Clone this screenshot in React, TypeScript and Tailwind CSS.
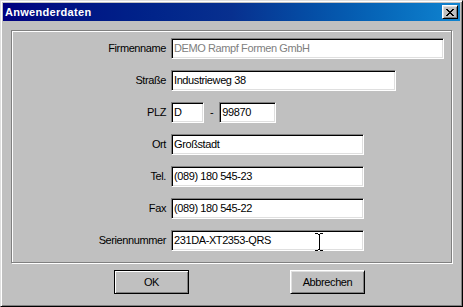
import React from "react";

function Field({ w, value, disabled }: { w: string; value: string; disabled?: boolean }) {
  return (
    <div
      className={`${w} h-[21px] bg-white border border-t-[#808080] border-l-[#808080] border-r-white border-b-white shadow-[inset_1px_1px_0_#000,inset_-1px_-1px_0_#dfdfdf] pl-[2px] flex items-center whitespace-nowrap overflow-hidden ${
        disabled ? "text-[#808080]" : "text-black"
      }`}
    >
      {value}
    </div>
  );
}

function Row({ label, children }: { label: string; children: React.ReactNode }) {
  return (
    <div className="flex items-center h-[21px]">
      <div className="w-[154px] text-right text-black mr-[5px] whitespace-nowrap">{label}</div>
      {children}
    </div>
  );
}

export default function App() {
  return (
    <div className="relative w-[463px] h-[307px] bg-[#c0c0c0] border border-t-[#dfdfdf] border-l-[#dfdfdf] border-r-black border-b-black shadow-[inset_1px_1px_0_#fff,inset_-1px_-1px_0_#808080] p-[2px] flex flex-col font-['Liberation_Sans',Arial,sans-serif] text-[11px] tracking-[-0.4px] leading-none">
      {/* Title bar */}
      <div className="h-[18px] flex items-center justify-between bg-linear-to-r from-[#000080] via-[#08308f] to-[#1084d0] pl-[2px] pr-[2px] shrink-0">
        <span className="text-white font-bold tracking-[0.3px] text-[11px]">Anwenderdaten</span>
        <div className="w-[16px] h-[14px] bg-[#c0c0c0] border border-t-white border-l-white border-r-black border-b-black shadow-[inset_1px_1px_0_#dfdfdf,inset_-1px_-1px_0_#808080] flex items-center justify-center">
          <svg width="8" height="7" viewBox="0 0 8 7" shapeRendering="crispEdges">
            <path
              d="M0 0h2v1h-2zM6 0h2v1h-2zM1 1h2v1h-2zM5 1h2v1h-2zM2 2h4v1h-4zM3 3h2v1h-2zM2 4h4v1h-4zM1 5h2v1h-2zM5 5h2v1h-2zM0 6h2v1h-2zM6 6h2v1h-2z"
              fill="#000"
            />
          </svg>
        </div>
      </div>

      {/* Group frame */}
      <div className="mt-[9px] ml-[8px] w-[441px] h-[233px] shrink-0 border border-[#808080] shadow-[inset_1px_1px_0_#fff,1px_1px_0_#fff] pt-[7px] flex flex-col gap-[11px]">
        <Row label="Firmenname">
          <Field w="w-[273px]" value="DEMO Rampf Formen GmbH" disabled />
        </Row>
        <Row label="Straße">
          <Field w="w-[225px]" value="Industrieweg 38" />
        </Row>
        <Row label="PLZ">
          <Field w="w-[33px]" value="D" />
          <span className="ml-[6px] mr-[6px] text-black">-</span>
          <Field w="w-[57px]" value="99870" />
        </Row>
        <Row label="Ort">
          <Field w="w-[193px]" value="Großstadt" />
        </Row>
        <Row label="Tel.">
          <Field w="w-[193px]" value="(089) 180 545-23" />
        </Row>
        <Row label="Fax">
          <Field w="w-[193px]" value="(089) 180 545-22" />
        </Row>
        <Row label="Seriennummer">
          <Field w="w-[193px]" value="231DA-XT2353-QRS" />
        </Row>
      </div>

      {/* Buttons */}
      <div className="mt-[7px] ml-[111px] flex gap-[101px] shrink-0">
        <div className="w-[75px] h-[24px] border border-black shadow-[inset_1px_1px_0_#fff,inset_-1px_-1px_0_#808080] flex items-center justify-center text-black">
          OK
        </div>
        <div className="w-[75px] h-[24px] border border-t-white border-l-white border-r-black border-b-black shadow-[inset_1px_1px_0_#dfdfdf,inset_-1px_-1px_0_#808080] flex items-center justify-center text-black">
          Abbrechen
        </div>
      </div>

      {/* Mouse I-beam cursor */}
      <svg
        className="absolute left-[314px] top-[232px]"
        width="8"
        height="18"
        viewBox="0 0 8 18"
        shapeRendering="crispEdges"
      >
        <path d="M0 0h3v1h-3zM5 0h3v1h-3zM3 1h2v1h-2zM3.5 2h1v14h-1zM3 16h2v1h-2zM0 17h3v1h-3zM5 17h3v1h-3z" fill="#000" />
      </svg>
    </div>
  );
}
